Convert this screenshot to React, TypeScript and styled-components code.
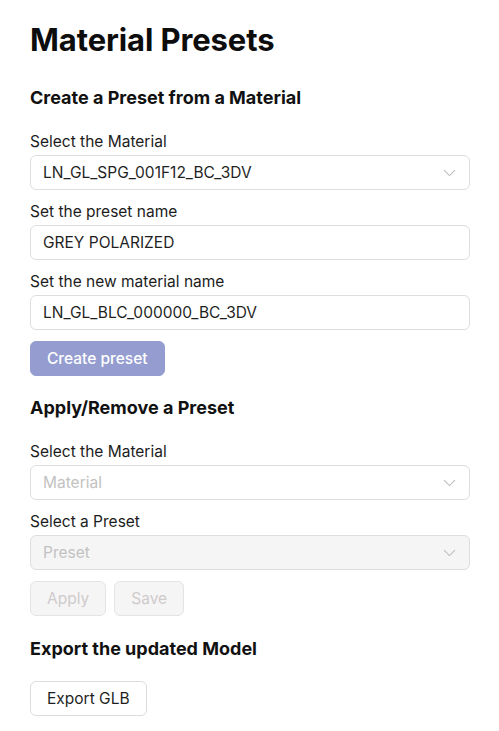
import React from 'react';
import styled, { createGlobalStyle } from 'styled-components';

const GlobalStyle = createGlobalStyle`
  html, body {
    margin: 0;
    padding: 0;
    background: #fff;
  }
  body {
    font-family: Inter, "Noto Sans", sans-serif;
    color: #111;
  }
`;

const Page = styled.div`
  padding: 20px 29px 20px 30px;
  box-sizing: border-box;
  width: 499px;
`;

const Title = styled.h1`
  margin: 0 0 26px;
  font-size: 31px;
  line-height: 40px;
  font-weight: 700;
  color: #0d0d0d;
  letter-spacing: -0.1px;
`;

const Heading = styled.h2<{ $gap?: number }>`
  margin: 0 0 ${(p) => p.$gap ?? 22}px;
  font-size: 18px;
  line-height: 24px;
  font-weight: 700;
  color: #111;
`;

const Field = styled.div<{ $gap?: number }>`
  display: flex;
  flex-direction: column;
  gap: 3px;
  margin-bottom: ${(p) => p.$gap ?? 12}px;
`;

const Label = styled.label`
  font-size: 15.5px;
  line-height: 20px;
  color: #1c1c1c;
`;

const Box = styled.div<{ $disabled?: boolean }>`
  height: 35px;
  box-sizing: border-box;
  border: 1px solid #dedede;
  border-radius: 6px;
  background: ${(p) => (p.$disabled ? '#f5f5f5' : '#fff')};
  display: flex;
  align-items: center;
  padding: 0 12px;
  font-size: 15.5px;
  color: #1f1f1f;
`;

const Value = styled.span<{ $placeholder?: boolean }>`
  flex: 1;
  color: ${(p) => (p.$placeholder ? '#c2c2c2' : '#1f1f1f')};
`;

const Chevron = styled.svg`
  width: 13px;
  height: 8px;
  margin-right: 1px;
`;

const Section = styled.section<{ $gap?: number }>`
  margin-bottom: ${(p) => p.$gap ?? 20}px;
`;

const ButtonRow = styled.div`
  display: flex;
  gap: 8px;
  margin-top: -1px;
`;

type Variant = 'primary' | 'disabled' | 'default';

const Button = styled.button<{ $variant: Variant }>`
  height: 35px;
  box-sizing: border-box;
  padding: 0 16px;
  border-radius: 6px;
  font-family: Inter, "Noto Sans", sans-serif;
  font-size: 15.5px;
  font-weight: ${(p) => (p.$variant === 'primary' ? 500 : 400)};
  cursor: pointer;
  border: 1px solid
    ${(p) =>
      p.$variant === 'primary' ? '#949cd0' : p.$variant === 'disabled' ? '#e6e3e3' : '#dcdcdc'};
  background: ${(p) =>
    p.$variant === 'primary' ? '#949cd0' : p.$variant === 'disabled' ? '#f5f5f5' : '#fff'};
  color: ${(p) =>
    p.$variant === 'primary' ? '#fff' : p.$variant === 'disabled' ? '#cfcbcb' : '#1f1f1f'};
`;

const SelectBox: React.FC<{ value: string; placeholder?: boolean; disabled?: boolean }> = ({
  value,
  placeholder,
  disabled,
}) => (
  <Box $disabled={disabled}>
    <Value $placeholder={placeholder}>{value}</Value>
    <Chevron viewBox="0 0 13 8" fill="none">
      <path d="M1 1.2 L6.5 6.6 L12 1.2" stroke="#bdbdbd" strokeWidth="1.1" />
    </Chevron>
  </Box>
);

const App: React.FC = () => {
  return (
    <>
      <GlobalStyle />
      <Page>
        <Title>Material Presets</Title>

        <Section>
          <Heading>Create a Preset from a Material</Heading>
          <Field>
            <Label>Select the Material</Label>
            <SelectBox value="LN_GL_SPG_001F12_BC_3DV" />
          </Field>
          <Field>
            <Label>Set the preset name</Label>
            <Box>
              <Value>GREY POLARIZED</Value>
            </Box>
          </Field>
          <Field $gap={11}>
            <Label>Set the new material name</Label>
            <Box>
              <Value>LN_GL_BLC_000000_BC_3DV</Value>
            </Box>
          </Field>
          <Button $variant="primary">Create preset</Button>
        </Section>

        <Section $gap={21}>
          <Heading>Apply/Remove a Preset</Heading>
          <Field>
            <Label>Select the Material</Label>
            <SelectBox value="Material" placeholder />
          </Field>
          <Field>
            <Label>Select a Preset</Label>
            <SelectBox value="Preset" placeholder disabled />
          </Field>
          <ButtonRow>
            <Button $variant="disabled" disabled>
              Apply
            </Button>
            <Button $variant="disabled" disabled>
              Save
            </Button>
          </ButtonRow>
        </Section>

        <Section>
          <Heading $gap={20}>Export the updated Model</Heading>
          <Button $variant="default">Export GLB</Button>
        </Section>
      </Page>
    </>
  );
};

export default App;
